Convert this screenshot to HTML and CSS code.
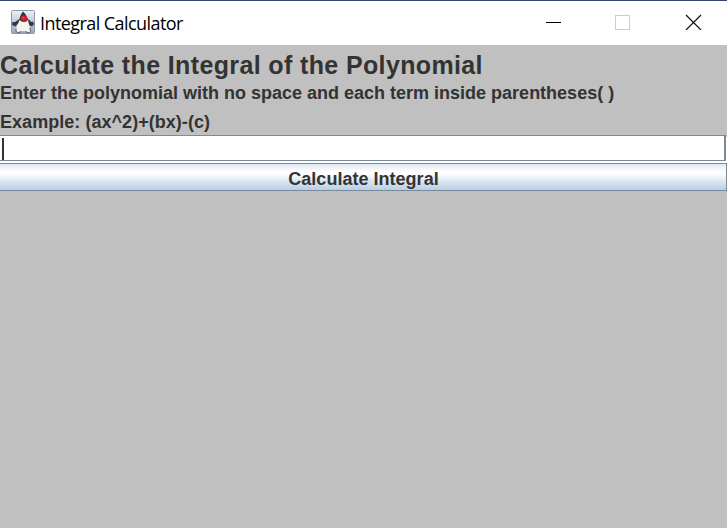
FILE: index.html
```html
<!DOCTYPE html>
<html lang="en">
<head>
<meta charset="utf-8">
<title>Integral Calculator</title>
<link rel="stylesheet" href="styles.css">
</head>
<body>
<div class="window">
  <header class="titlebar">
    <svg class="app-icon" viewBox="0 0 24 24">
      <defs>
        <linearGradient id="tile" x1="0" y1="0" x2="0" y2="1">
          <stop offset="0" stop-color="#eef1f7"/>
          <stop offset="1" stop-color="#98a4c0"/>
        </linearGradient>
      </defs>
      <rect x=".5" y=".5" width="23" height="23" rx="1" fill="url(#tile)" stroke="#8d98ae"/>
      <path d="M7 13.500L4.500 16.500L1 15L1.500 12L4 12L8.500 9L17 9L20.500 12L22 11.500L23 14L21 16.500L18 15Z" fill="#343a42"/>
      <path d="M12 1.500C9.500 4 8.500 8 8 12L17.500 12C16.500 7 14.500 3.500 12 1.500Z" fill="#30353a"/>
      <path d="M8.500 10C7.500 13 5 17 5 21Q7 23 9.500 21.500Q12 20.500 14 21.500L18 23Q20 22 19 19L17 10Q13 14 8.500 10Z" fill="#f4f4f0"/>
      <path d="M5 19Q4.500 23 8 22.500L10 21.500M14 21.500L18 23Q20.500 22 19 18" fill="none" stroke="#586069"/>
      <circle cx="13" cy="8.800" r="3.300" fill="#c51f2b"/>
      <circle cx="12.500" cy="8" r="1" fill="#e4525d"/>
    </svg>
    <span class="title">Integral Calculator</span>
    <svg class="controls" viewBox="0 0 170 16" shape-rendering="crispEdges">
      <path d="M3 8.500H18" stroke="#000"/>
      <rect x="72.500" y="1.500" width="14" height="14" fill="none" stroke="#cccad2"/>
      <path d="M143 1L158 16M158 1L143 16" stroke="#111" stroke-width="1.200" shape-rendering="auto"/>
    </svg>
  </header>
  <main class="content">
    <h1 class="heading">Calculate the Integral of the Polynomial</h1>
    <p class="hint">Enter the polynomial with no space and each term inside parentheses( )</p>
    <p class="hint example">Example: (ax^2)+(bx)-(c)</p>
    <div class="field"><span class="caret"></span></div>
    <button class="calculate"><span class="label">Calculate Integral</span></button>
  </main>
</div>
</body>
</html>
```
FILE: styles.css
```css
* { box-sizing: border-box; }
body { margin: 0; overflow: hidden; background: #c0c0c0; }
.window { height: 528px; border-top: 1px solid #34466d; }
.titlebar {
  display: flex;
  align-items: center;
  height: 44px;
  padding: 0 14px 0 11px;
  background: #fff;
}
.app-icon { width: 24px; height: 24px; margin-top: -2px; }
.title {
  margin-left: 5px;
  font: 18px/24px "Open Sans", sans-serif;
  letter-spacing: -0.57px;
  color: #000;
  white-space: nowrap;
}
.controls { width: 170px; height: 16px; margin-left: auto; margin-top: -2px; }
.content {
  font-family: "Liberation Sans", sans-serif;
  font-weight: bold;
  color: #333;
}
.heading {
  margin: 0;
  padding-top: 5px;
  height: 34px;
  font-size: 25px;
  line-height: 30px;
  letter-spacing: 0.37px;
  white-space: nowrap;
}
.hint {
  margin: 0;
  height: 29px;
  font-size: 18px;
  line-height: 28px;
  white-space: nowrap;
}
.example { height: 27px; letter-spacing: 0.04px; }
.field {
  height: 26px;
  margin: 0 1px 2px 0;
  padding: 2px;
  background: #fff;
  border: 1px solid #7a8a99;
  border-left: 0;
  border-right-width: 2px;
  box-shadow: 0 2px #fff, 1px 2px #fff;
}
.caret { display: block; width: 2px; height: 22px; background: #333; }
.calculate {
  display: block;
  width: 100%;
  height: 28px;
  padding: 2px 0 0 1px;
  border: 1px solid #7a8a99;
  border-left: 0;
  background: linear-gradient(#dfe9f3, #fff 30%, #fff 38%, #dce7f3 65%, #b8cfe5);
  color: #333;
  font: bold 18px/26px "Liberation Sans", sans-serif;
}
.label { letter-spacing: 0.02px; }
```
